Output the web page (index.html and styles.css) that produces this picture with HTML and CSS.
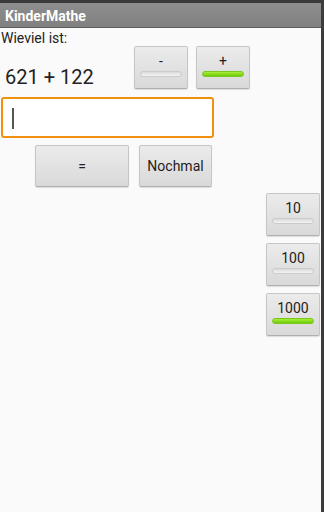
FILE: index.html
```html
<!DOCTYPE html>
<html lang="de">
<head>
    <meta charset="UTF-8">
    <meta name="viewport" content="width=device-width, initial-scale=1.0">
    <title>KinderMathe</title>
    <link rel="stylesheet" href="styles.css">
</head>
<body>
    <div class="app">
        <div class="titlebar">KinderMathe</div>

        <div class="content">
            <div class="question-label">Wieviel ist:</div>

            <div class="task-row">
                <div class="task">621 + 122</div>
                <div class="op-buttons">
                    <button class="btn toggle">
                        <span class="btn-text">-</span>
                        <span class="indicator"></span>
                    </button>
                    <button class="btn toggle">
                        <span class="btn-text">+</span>
                        <span class="indicator on"></span>
                    </button>
                </div>
            </div>

            <div class="answer-box">
                <span class="cursor"></span>
            </div>

            <div class="action-row">
                <button class="btn btn-equals">=</button>
                <button class="btn btn-again">Nochmal</button>
            </div>

            <div class="range-buttons">
                <button class="btn toggle">
                    <span class="btn-text">10</span>
                    <span class="indicator"></span>
                </button>
                <button class="btn toggle">
                    <span class="btn-text">100</span>
                    <span class="indicator"></span>
                </button>
                <button class="btn toggle">
                    <span class="btn-text">1000</span>
                    <span class="indicator on"></span>
                </button>
            </div>
        </div>
    </div>
</body>
</html>
```

FILE: styles.css
```css
* {
    margin: 0;
    padding: 0;
    box-sizing: border-box;
    font-family: Roboto, "Liberation Sans", sans-serif;
}

body {
    background: #fafafa;
}

.app {
    width: 324px;
    height: 512px;
    background: #fafafa;
    border-right: 3px solid #3c3c3c;
    overflow: hidden;
}

/* Title bar */
.titlebar {
    height: 28px;
    padding: 4px 0 0 5px;
    border-top: 3px solid #3a3a3a;
    border-bottom: 1px solid #5e5e5e;
    background: linear-gradient(#8e8e8e, #808080);
    color: #fff;
    font-size: 14px;
    font-weight: bold;
    line-height: 19px;
}

.content {
    padding-top: 2px;
}

.question-label {
    padding-left: 1px;
    font-size: 14px;
    line-height: 16px;
    color: #222;
}

/* Task row */
.task-row {
    display: flex;
    height: 43px;
}

.task {
    width: 134px;
    padding-left: 5px;
    align-self: flex-end;
    font-size: 20px;
    line-height: 24px;
    color: #222;
}

.op-buttons {
    display: flex;
    gap: 8px;
}

/* Buttons */
.btn {
    display: flex;
    flex-direction: column;
    align-items: center;
    justify-content: center;
    border: 1px solid #c6c6c6;
    border-bottom-color: #b0b0b0;
    border-radius: 2px;
    background: linear-gradient(#ebebeb, #d9d9d9);
    box-shadow: 0 1px 1px rgba(0,0,0,0.12);
    color: #222;
    font-size: 14px;
}

.toggle {
    width: 54px;
    height: 43px;
    justify-content: flex-start;
    padding-top: 6px;
    gap: 2px;
}

.btn-text {
    line-height: 16px;
}

.indicator {
    width: 42px;
    height: 6px;
    border-radius: 3px;
    background: linear-gradient(#dadada, #f4f4f4);
    border: 1px solid #cbcbcb;
}

.indicator.on {
    background: linear-gradient(#a6ee35, #6fcc0c);
    border-color: #78c81e;
}

/* Answer input */
.answer-box {
    margin: 8px 0 0 1px;
    width: 213px;
    height: 41px;
    border: 2px solid #f2900f;
    border-radius: 3px;
    background: #fff;
    padding: 9px 0 0 9px;
}

.cursor {
    display: block;
    width: 2px;
    height: 21px;
    background: #555;
}

/* Actions */
.action-row {
    display: flex;
    gap: 10px;
    margin-top: 7px;
    padding-left: 35px;
}

.btn-equals {
    width: 94px;
    height: 42px;
}

.btn-again {
    width: 73px;
    height: 42px;
}

/* Range buttons */
.range-buttons {
    display: flex;
    flex-direction: column;
    align-items: flex-end;
    gap: 7px;
    margin-top: 6px;
    padding-right: 1px;
}
```
